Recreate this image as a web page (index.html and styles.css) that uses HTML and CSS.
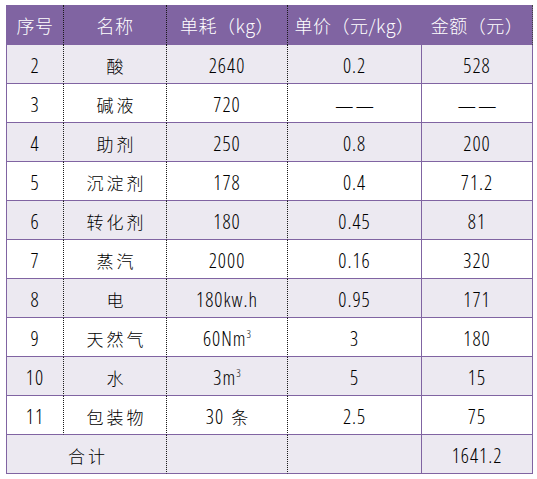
FILE: index.html
```html
<!DOCTYPE html>
<html lang="zh-CN">
<head>
<meta charset="utf-8">
<title>成本表</title>
<link rel="stylesheet" href="styles.css">
</head>
<body>
<div class="page">
  <table class="cost">
    <thead>
      <tr>
        <th class="c1">序号</th>
        <th class="c2">名称</th>
        <th class="c3">单耗（kg）</th>
        <th class="c4">单价（元/kg）</th>
        <th class="c5">金额（元）</th>
      </tr>
    </thead>
    <tbody>
      <tr class="band">
        <td class="c1">2</td><td class="c2 zh">酸</td><td class="c3">2640</td><td class="c4">0.2</td><td class="c5">528</td>
      </tr>
      <tr>
        <td class="c1">3</td><td class="c2 zh">碱液</td><td class="c3">720</td><td class="c4"><span class="dash">—</span><span class="dash">—</span></td><td class="c5"><span class="dash">—</span><span class="dash">—</span></td>
      </tr>
      <tr class="band">
        <td class="c1">4</td><td class="c2 zh">助剂</td><td class="c3">250</td><td class="c4">0.8</td><td class="c5">200</td>
      </tr>
      <tr>
        <td class="c1">5</td><td class="c2 zh">沉淀剂</td><td class="c3">178</td><td class="c4">0.4</td><td class="c5">71.2</td>
      </tr>
      <tr class="band">
        <td class="c1">6</td><td class="c2 zh">转化剂</td><td class="c3">180</td><td class="c4">0.45</td><td class="c5">81</td>
      </tr>
      <tr>
        <td class="c1">7</td><td class="c2 zh">蒸汽</td><td class="c3">2000</td><td class="c4">0.16</td><td class="c5">320</td>
      </tr>
      <tr class="band">
        <td class="c1">8</td><td class="c2 zh">电</td><td class="c3">180kw.h</td><td class="c4">0.95</td><td class="c5">171</td>
      </tr>
      <tr>
        <td class="c1">9</td><td class="c2 zh">天然气</td><td class="c3">60Nm<sup>3</sup></td><td class="c4">3</td><td class="c5">180</td>
      </tr>
      <tr class="band">
        <td class="c1">10</td><td class="c2 zh">水</td><td class="c3">3m<sup>3</sup></td><td class="c4">5</td><td class="c5">15</td>
      </tr>
      <tr>
        <td class="c1">11</td><td class="c2 zh">包装物</td><td class="c3">30<span class="zh">条</span></td><td class="c4">2.5</td><td class="c5">75</td>
      </tr>
      <tr class="band">
        <td class="c1 zh" colspan="2">合计</td><td class="c3"></td><td class="c4"></td><td class="c5">1641.2</td>
      </tr>
    </tbody>
  </table>
</div>
</body>
</html>
```

FILE: styles.css
```css
html, body {
  margin: 0;
  padding: 0;
  background: #ffffff;
}

.page {
  padding: 5px 0 0 6px;
}

.cost {
  border-collapse: separate;
  border-spacing: 0;
  table-layout: fixed;
  width: 527px;
  font-family: "Open Sans", "Noto Sans CJK SC", sans-serif;
  font-stretch: 75%;
  font-weight: 300;
  font-size: 20px;
  letter-spacing: 1px;
  color: #000000;
}

.cost th,
.cost td {
  box-sizing: border-box;
  padding: 0;
  text-align: center;
  vertical-align: middle;
  white-space: nowrap;
}

.cost thead tr {
  height: 40px;
}

.cost tbody tr {
  height: 39px;
}

.cost th {
  background: #8064a2;
  color: #ffffff;
  font-family: "Noto Sans CJK SC", sans-serif;
  font-stretch: normal;
  font-weight: 300;
  font-size: 18px;
  letter-spacing: 0.5px;
  line-height: 20px;
}

.cost th.c1 { width: 57px; border-left: 1px solid #8064a2; }
.cost th.c2 { width: 103px; border-left: 1px dotted #1a1a1a; }
.cost th.c3 { width: 121px; border-left: 1px dotted #1a1a1a; }
.cost th.c4 { width: 134px; border-left: 1px dotted #1a1a1a; }
.cost th.c5 { width: 112px; border-left: 1px solid #8064a2; border-right: 1px dotted #444444; }

.cost td {
  border-bottom: 1px solid #8064a2;
  line-height: 22px;
  padding-top: 3px;
}

.cost td.c1 { border-left: 1px solid #8064a2; }
.cost td.c2,
.cost td.c3,
.cost td.c4 { border-left: 1px dotted #1a1a1a; }
.cost td.c5 { border-left: 1px solid #8064a2; border-right: 1px solid #8064a2; }

.cost tbody tr.band td {
  background: #ece9f1;
}

.zh {
  font-family: "Noto Sans CJK SC", sans-serif;
  font-stretch: normal;
  font-weight: 300;
  font-size: 17px;
  letter-spacing: 3px;
}

.cost td.zh {
  padding-left: 3px;
}

.cost td .zh {
  margin-left: 7px;
  letter-spacing: 0;
}

.dash {
  font-family: "Noto Sans CJK SC", sans-serif;
  font-stretch: normal;
  font-weight: 300;
  font-size: 21px;
  line-height: 22px;
  letter-spacing: 0;
  margin: 0 1px;
}

.cost sup {
  font-size: 11px;
  line-height: 0;
  letter-spacing: 0;
  vertical-align: 8px;
}
```
